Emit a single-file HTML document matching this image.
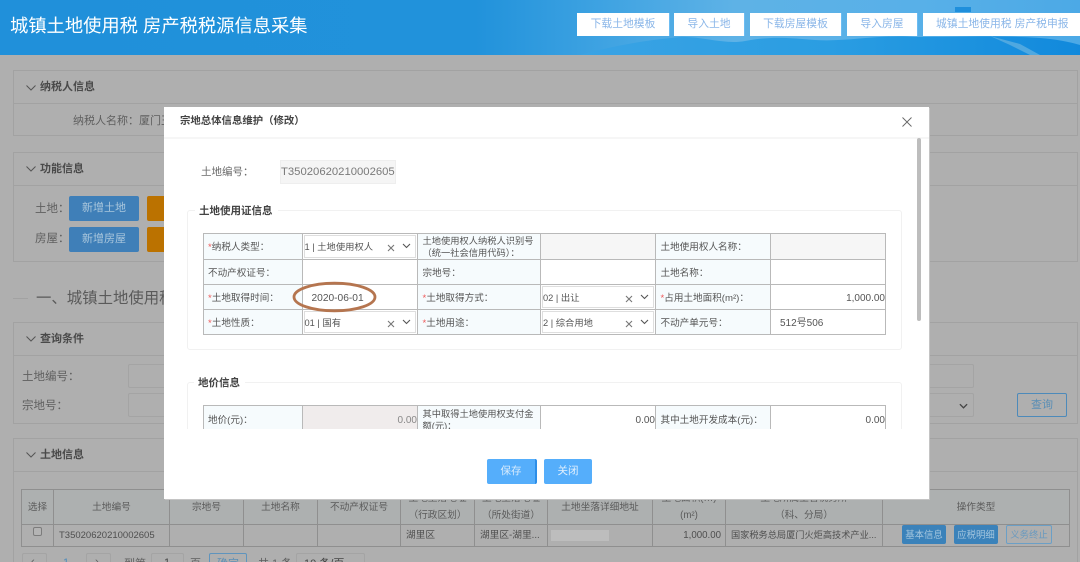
<!DOCTYPE html>
<html lang="zh-CN">
<head>
<meta charset="utf-8">
<title>城镇土地使用税 房产税税源信息采集</title>
<style>
html,body{margin:0;padding:0;width:1080px;height:562px;overflow:hidden;background:#afafaf}
*{box-sizing:border-box}
#root{position:relative;width:1080px;height:562px;overflow:hidden;background:#afafaf;font-family:"Liberation Sans","Noto Sans CJK SC",sans-serif;filter:blur(.35px)}
.a{position:absolute;white-space:nowrap}
.t{position:absolute;white-space:nowrap;line-height:16px;height:16px;color:#5f5f5f;font-size:11.5px}
.hb{position:absolute;top:13px;height:23px;background:#fff;color:#8ab6e8;font-size:10.8px;line-height:23px;text-align:center;white-space:nowrap;box-shadow:1px 0 0 #6cbcf2}
.panel{position:absolute;left:13px;width:1065px;border:1px solid #a2a2a2}
.pl{position:absolute;left:0;right:0;height:1px;background:#a2a2a2}
.ph{position:absolute;font-size:11px;font-weight:bold;color:#4a4a4a;line-height:16px;white-space:nowrap}
.chev{position:absolute;width:10px;height:6px}
.btn{position:absolute;border-radius:2px;text-align:center;white-space:nowrap}
.in{position:absolute;border:1px solid #a4a4a4;border-radius:2px}
#bt{position:absolute;left:21px;top:489px;width:1048px;height:56px;border-collapse:collapse;table-layout:fixed;font-size:9.7px;color:#4f4f4f;background:#adb0b0}
#bt td{border:1px solid #8f8f8f;padding:0;text-align:center;line-height:17px;overflow:hidden;white-space:nowrap}
#bt tr.h td{height:34px;color:#5b5b5b}
#bt tr.r td{height:22px;background:#afafaf}
#modal{position:absolute;left:164px;top:107px;width:765px;height:392px;background:#fff;box-shadow:1px 1px 0 #c4c4c4}
.fs{position:absolute;border:1px solid #f1f1f1;border-radius:3px}
.ft{position:absolute;background:#fff;padding:0 5px 0 4px;font-size:10.5px;font-weight:bold;color:#444;line-height:16px;white-space:nowrap}
table.m{position:absolute;border-collapse:collapse;table-layout:fixed;font-size:9.6px;color:#555}
table.m td{border:1px solid #b9b9b9;padding:3px 0 0;line-height:12px;height:25px;overflow:hidden;white-space:nowrap;position:relative}
td.l{background:#f6fbfd;padding-left:4.5px!important}
td.s{font-size:9.25px}
td.g{background:#f6f6f6}
td.w{background:#fff}
td.n{text-align:right;font-size:10px}
.st{color:#ef5a5a}
.sel{position:absolute;left:1px;right:1px;top:1px;bottom:1px;border:1px solid #dedede;background:#fff;padding-left:0;line-height:22px;font-size:9.3px}
.x{position:absolute;right:20px;top:8px;width:8px;height:8px}
.c{position:absolute;right:4px;top:7px;width:9px;height:6px}
</style>
</head>
<body>
<div id="root">

<!-- page header -->
<svg class="a" style="left:0;top:0" width="1080" height="55" viewBox="0 0 1080 55">
<defs>
<linearGradient id="hg" x1="0" x2="1" y1="0" y2="0">
<stop offset="0" stop-color="#2090da"/>
<stop offset=".44" stop-color="#2192db"/>
<stop offset=".56" stop-color="#3fa3e2"/>
<stop offset=".68" stop-color="#5eb2e6"/>
<stop offset=".85" stop-color="#58b0e8"/>
<stop offset="1" stop-color="#4ca9e6"/>
</linearGradient>
<linearGradient id="hw" x1="0" x2="1" y1="0" y2="0">
<stop offset="0" stop-color="#3aa3e4"/>
<stop offset=".5" stop-color="#2a9de2"/>
<stop offset="1" stop-color="#1189dc"/>
</linearGradient>
</defs>
<rect width="1080" height="55" fill="url(#hg)"/>
<path d="M580 55 C620 44 650 40 680 37 C700 36 725 45 745 41 C770 36 790 38 815 40 C850 42 880 34 915 37 C960 37 1000 35 1040 38 C1055 39 1070 42 1080 45 L1080 55 Z" fill="url(#hw)"/>
<path d="M990 36 L1020 44 L1040 55 L1030 55 L1010 45 Z" fill="#4fa8e0"/>
<rect x="955" y="7" width="16" height="5" fill="#1f8fdc"/>
</svg>
<div class="a" style="left:10px;top:12px;font-size:18.3px;line-height:27px;color:#fff">城镇土地使用税 房产税税源信息采集</div>
<div class="hb" style="left:577px;width:92px">下载土地模板</div>
<div class="hb" style="left:674px;width:70px">导入土地</div>
<div class="hb" style="left:750px;width:91px">下载房屋模板</div>
<div class="hb" style="left:847px;width:70px">导入房屋</div>
<div class="hb" style="left:923px;width:157px;padding-left:13px;text-align:left">城镇土地使用税 房产税申报</div>

<!-- panel 1 -->
<div class="panel" style="top:70px;height:66px"><div class="pl" style="top:32px"></div></div>
<svg class="chev" style="left:26px;top:85px" viewBox="0 0 10 6"><path d="M.5.5 5 5 9.500.5" fill="none" stroke="#555" stroke-width="1"/></svg>
<div class="ph" style="left:40px;top:79px">纳税人信息</div>
<div class="t" style="left:73px;top:113px;font-size:11px">纳税人名称：厦门王</div>

<!-- panel 2 -->
<div class="panel" style="top:152px;height:110px"><div class="pl" style="top:32px"></div></div>
<svg class="chev" style="left:26px;top:166px" viewBox="0 0 10 6"><path d="M.5.5 5 5 9.500.5" fill="none" stroke="#555" stroke-width="1"/></svg>
<div class="ph" style="left:40px;top:161px">功能信息</div>
<div class="t" style="left:35px;top:201px">土地：</div>
<div class="t" style="left:35px;top:231px">房屋：</div>
<div class="btn" style="left:69px;top:196px;width:70px;height:25px;line-height:25px;background:#3f7fb8;color:#a9c6dc;font-size:11px">新增土地</div>
<div class="btn" style="left:69px;top:227px;width:70px;height:25px;line-height:25px;background:#3f7fb8;color:#a9c6dc;font-size:11px">新增房屋</div>
<div class="btn" style="left:147px;top:196px;width:30px;height:25px;background:#bb7200"></div>
<div class="btn" style="left:147px;top:227px;width:30px;height:25px;background:#bb7200"></div>

<!-- section title -->
<div class="a" style="left:13px;top:298px;width:15px;height:1px;background:#a2a2a2"></div>
<div class="a" style="left:36px;top:287px;font-size:15.4px;line-height:24px;color:#5a5a5a">一、城镇土地使用税</div>

<!-- panel 3 -->
<div class="panel" style="top:322px;height:102px"><div class="pl" style="top:32px"></div></div>
<svg class="chev" style="left:26px;top:336px" viewBox="0 0 10 6"><path d="M.5.5 5 5 9.500.5" fill="none" stroke="#555" stroke-width="1"/></svg>
<div class="ph" style="left:40px;top:331px">查询条件</div>
<div class="t" style="left:22px;top:369px">土地编号：</div>
<div class="t" style="left:22px;top:398px">宗地号：</div>
<div class="in" style="left:128px;top:364px;width:60px;height:24px"></div>
<div class="in" style="left:128px;top:393px;width:60px;height:24px"></div>
<div class="in" style="left:900px;top:364px;width:74px;height:24px"></div>
<div class="in" style="left:900px;top:393px;width:74px;height:24px"></div>
<svg class="chev" style="left:959px;top:403px;width:9px" viewBox="0 0 10 6"><path d="M1 1 5 5 9 1" fill="none" stroke="#444" stroke-width="1.5"/></svg>
<div class="btn" style="left:1017px;top:393px;width:50px;height:24px;line-height:22px;border:1px solid #4d8aba;color:#5a8eb5;font-size:11px">查询</div>

<!-- panel 4 -->
<div class="panel" style="top:438px;height:140px"><div class="pl" style="top:32px"></div></div>
<svg class="chev" style="left:26px;top:452px" viewBox="0 0 10 6"><path d="M.5.5 5 5 9.500.5" fill="none" stroke="#555" stroke-width="1"/></svg>
<div class="ph" style="left:40px;top:447px">土地信息</div>

<table id="bt">
<colgroup><col style="width:32px"><col style="width:116px"><col style="width:74px"><col style="width:74px"><col style="width:83px"><col style="width:74px"><col style="width:73px"><col style="width:105px"><col style="width:73px"><col style="width:157px"><col style="width:187px"></colgroup>
<tr class="h"><td>选择</td><td>土地编号</td><td>宗地号</td><td>土地名称</td><td>不动产权证号</td><td>土地坐落地址<br>（行政区划）</td><td>土地坐落地址<br>（所处街道）</td><td>土地坐落详细地址</td><td>土地面积(㎡)<br>(m²)</td><td>土地所属主管税务所<br>（科、分局）</td><td>操作类型</td></tr>
<tr class="r"><td></td><td style="text-align:left;padding-left:5px;font-size:9.5px">T35020620210002605</td><td></td><td></td><td></td><td style="text-align:left;padding-left:5px">湖里区</td><td style="text-align:left;padding-left:5px">湖里区-湖里...</td><td></td><td style="text-align:right;padding-right:4px">1,000.00</td><td style="text-align:left;padding-left:5px;font-size:9.2px">国家税务总局厦门火炬高技术产业...</td><td></td></tr>
</table>
<div class="a" style="left:33px;top:527px;width:9px;height:9px;border:1px solid #7c7c7c;border-radius:2px;background:#b4b4b4"></div>
<div class="a" style="left:551px;top:530px;width:58px;height:11px;background:#bdbdbd"></div>
<div class="btn" style="left:902px;top:525px;width:44px;height:19px;line-height:19px;background:#3b82ba;color:#a5c6de;font-size:9.4px">基本信息</div>
<div class="btn" style="left:954px;top:525px;width:44px;height:19px;line-height:19px;background:#3b82ba;color:#a5c6de;font-size:9.4px">应税明细</div>
<div class="btn" style="left:1006px;top:525px;width:46px;height:19px;line-height:18px;border:1px solid #6b9fc6;color:#6a9abf;font-size:9.4px">义务终止</div>

<!-- pager -->
<div class="in" style="left:22px;top:553px;width:25px;height:24px"></div>
<div class="t" style="left:31px;top:554px;font-size:11px">‹</div>
<div class="t" style="left:63px;top:555px;color:#4d8aba;font-size:11px">1</div>
<div class="in" style="left:86px;top:553px;width:25px;height:24px"></div>
<div class="t" style="left:95px;top:554px;font-size:11px">›</div>
<div class="t" style="left:124px;top:556px;font-size:11px">到第</div>
<div class="in" style="left:151px;top:553px;width:33px;height:24px"></div>
<div class="t" style="left:164px;top:555px;font-size:11px;color:#444">1</div>
<div class="t" style="left:190px;top:556px;font-size:11px">页</div>
<div class="btn" style="left:209px;top:553px;width:38px;height:24px;border:1px solid #5f94bd;color:#5a8eb5;font-size:11px;line-height:20px">确定</div>
<div class="t" style="left:258px;top:556px;font-size:11px">共 1 条</div>
<div class="in" style="left:296px;top:553px;width:69px;height:24px"></div>
<div class="t" style="left:304px;top:556px;font-size:11px;color:#444">10 条/页</div>

<!-- modal -->
<div id="modal">
  <div class="a" style="left:16px;top:7px;font-size:10.4px;font-weight:bold;line-height:16px;color:#444">宗地总体信息维护（修改）</div>
  <svg class="a" style="left:738px;top:10px" width="10" height="10" viewBox="0 0 10 10"><path d="M.5.5 9.500 9.500M9.500.5.5 9.500" stroke="#666" stroke-width=".9" fill="none"/></svg>
  <div class="a" style="left:0;top:30px;width:765px;height:1.500px;background:#f6f6f6"></div>
  <div class="a" style="left:753px;top:31px;width:4px;height:183px;background:#bdbdbd;border-radius:2px"></div>

  <div class="a" style="left:37px;top:57px;font-size:10.5px;line-height:16px;color:#6a6a6a">土地编号：</div>
  <div class="a" style="left:116px;top:53px;width:116px;height:24px;background:#f5f5f5;border:1px solid #eee;font-size:11.3px;line-height:22px;color:#7a7a7a;padding-left:0">T35020620210002605</div>

  <div class="fs" style="left:23px;top:103px;width:715px;height:140px"></div>
  <div class="ft" style="left:31px;top:96px">土地使用证信息</div>

  <table class="m" style="left:38.500px;top:126px;width:682.500px">
    <colgroup><col style="width:99px"><col style="width:115.500px"><col style="width:123px"><col style="width:115px"><col style="width:115px"><col style="width:115px"></colgroup>
    <tr>
      <td class="l"><span class="st">*</span>纳税人类型：</td>
      <td class="w"><div class="sel">1 | 土地使用权人<svg class="x" viewBox="0 0 8 8"><path d="M1 1 7 7M7 1 1 7" stroke="#777" stroke-width="1.100"/></svg><svg class="c" viewBox="0 0 9 6"><path d="M1 1 4.500 4.500 8 1" stroke="#555" stroke-width="1.100" fill="none"/></svg></div></td>
      <td class="l s" style="padding-top:1px">土地使用权人纳税人识别号<br>（统一社会信用代码）：</td>
      <td class="g"></td>
      <td class="l">土地使用权人名称：</td>
      <td class="g"></td>
    </tr>
    <tr>
      <td class="l">不动产权证号：</td>
      <td class="w"></td>
      <td class="l">宗地号：</td>
      <td class="w"></td>
      <td class="l">土地名称：</td>
      <td class="w"></td>
    </tr>
    <tr>
      <td class="l"><span class="st">*</span>土地取得时间：</td>
      <td class="w" style="padding-left:9px;font-size:10.2px">2020-06-01</td>
      <td class="l"><span class="st">*</span>土地取得方式：</td>
      <td class="w"><div class="sel">02 | 出让<svg class="x" viewBox="0 0 8 8"><path d="M1 1 7 7M7 1 1 7" stroke="#777" stroke-width="1.100"/></svg><svg class="c" viewBox="0 0 9 6"><path d="M1 1 4.500 4.500 8 1" stroke="#555" stroke-width="1.100" fill="none"/></svg></div></td>
      <td class="l"><span class="st">*</span>占用土地面积(m²)：</td>
      <td class="w n">1,000.00</td>
    </tr>
    <tr>
      <td class="l"><span class="st">*</span>土地性质：</td>
      <td class="w"><div class="sel">01 | 国有<svg class="x" viewBox="0 0 8 8"><path d="M1 1 7 7M7 1 1 7" stroke="#777" stroke-width="1.100"/></svg><svg class="c" viewBox="0 0 9 6"><path d="M1 1 4.500 4.500 8 1" stroke="#555" stroke-width="1.100" fill="none"/></svg></div></td>
      <td class="l"><span class="st">*</span>土地用途：</td>
      <td class="w"><div class="sel">2 | 综合用地<svg class="x" viewBox="0 0 8 8"><path d="M1 1 7 7M7 1 1 7" stroke="#777" stroke-width="1.100"/></svg><svg class="c" viewBox="0 0 9 6"><path d="M1 1 4.500 4.500 8 1" stroke="#555" stroke-width="1.100" fill="none"/></svg></div></td>
      <td class="l">不动产单元号：</td>
      <td class="w" style="padding-left:9px;font-size:10px">512号506</td>
    </tr>
  </table>

  <svg class="a" style="left:128px;top:174px" width="86" height="32" viewBox="0 0 86 32"><ellipse cx="42.500" cy="16" rx="40.500" ry="13.800" fill="none" stroke="#b5754f" stroke-width="2.800"/></svg>

  <div class="a" style="left:0;top:250px;width:765px;height:72px;overflow:hidden">
    <div class="fs" style="left:23px;top:25px;width:715px;height:100px"></div>
    <div class="ft" style="left:30px;top:18px">地价信息</div>
    <table class="m" style="left:38.500px;top:48px;width:682.500px">
      <colgroup><col style="width:99px"><col style="width:115.500px"><col style="width:123px"><col style="width:115px"><col style="width:115px"><col style="width:115px"></colgroup>
      <tr>
        <td class="l" style="height:27px">地价(元)：</td>
        <td class="n" style="background:#f0ecec;color:#888">0.00</td>
        <td class="l s" style="padding-top:1px">其中取得土地使用权支付金<br>额(元)：</td>
        <td class="w n">0.00</td>
        <td class="l">其中土地开发成本(元)：</td>
        <td class="w n">0.00</td>
      </tr>
    </table>
  </div>

  <div class="btn" style="left:323px;top:352px;width:50px;height:25px;line-height:25px;background:#55aefb;color:#d7ebfc;font-size:10.500px;border-right:2px solid #2d8ee8">保存</div>
  <div class="btn" style="left:380px;top:352px;width:48px;height:25px;line-height:25px;background:#55aefb;color:#e4f1fd;font-size:10.500px">关闭</div>
</div>

</div>
</body>
</html>
